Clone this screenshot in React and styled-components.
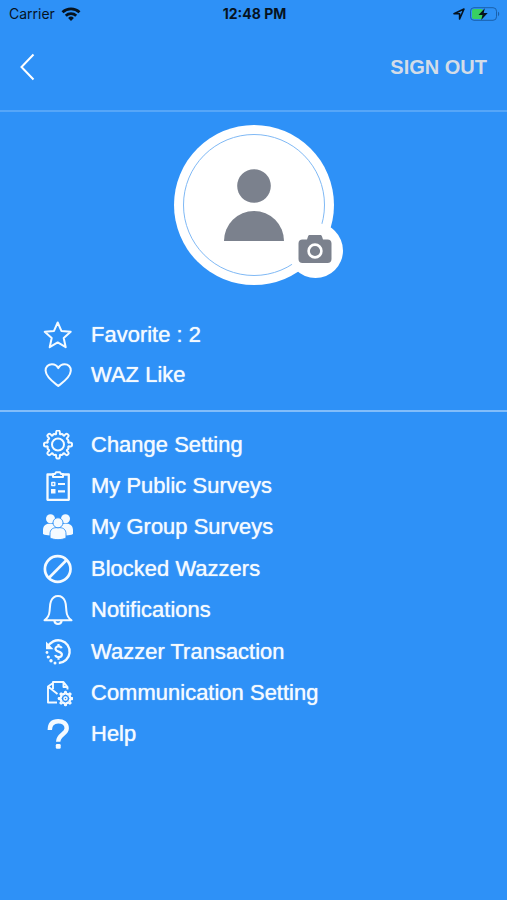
import React from "react";
import styled, { createGlobalStyle } from "styled-components";

// closed outline of a cog with rounded teeth
const cogPath = (cx, cy, outer, inner, teeth = 8) => {
  const step = (Math.PI * 2) / teeth;
  const at = (r, a) =>
    `${(cx + r * Math.sin(a)).toFixed(2)} ${(cy - r * Math.cos(a)).toFixed(2)}`;
  let d = "";
  for (let i = 0; i < teeth; i++) {
    const a = i * step;
    d += `${i ? "L" : "M"}${at(inner, a - step * 0.22)}`;
    d += `Q${at(outer, a - step * 0.19)} ${at(outer, a - step * 0.07)}`;
    d += `L${at(outer, a + step * 0.07)}`;
    d += `Q${at(outer, a + step * 0.19)} ${at(inner, a + step * 0.22)}`;
    d += `Q${at(inner - 0.6, a + step * 0.3)} ${at(inner, a + step * 0.37)}`;
    d += `Q${at(inner + 0.8, a + step * 0.5)} ${at(inner, a + step * 0.63)}`;
    d += `Q${at(inner - 0.6, a + step * 0.7)} ${at(inner, a + step * 0.78)}`;
  }
  return d + "Z";
};

const StarIcon = () => (
  <Icon viewBox="0 0 30 30">
    <path d="M14.7 2.500l3.700 8.400 9.300.9-7 6.200 2 9.200-8-4.800-8 4.800 2-9.200-7-6.200 9.300-.9z" />
  </Icon>
);

const HeartIcon = () => (
  <Icon viewBox="0 0 30 30">
    <path d="M15.300 26C11 22.600 3 17.500 2.600 10.800 2.400 6.800 5.400 4.200 8.900 4.200c2.700 0 5.200 1.400 6.400 4 1.200-2.600 3.700-4 6.400-4 3.500 0 6.300 2.600 6.100 6.600C27.500 17.500 19.600 22.600 15.300 26z" />
  </Icon>
);

const GearIcon = () => (
  <Icon viewBox="0 0 30 30">
    <path d={cogPath(15, 14.5, 14, 10.8)} />
    <circle cx="15" cy="14.5" r="6" />
  </Icon>
);

const ClipboardIcon = () => (
  <Icon viewBox="0 0 30 30">
    <path d="M10 3.500H4.500v25.300h21.300V3.500H20" strokeWidth="2.300" />
    <path d="M10 6V3h2l1-1.700h4L18 3h2v3z" strokeWidth="2" />
    <path d="M8.800 11.500h3v3h-3z" strokeWidth="1.400" />
    <path d="M8 18h4.500v4.500H8z" fill="currentColor" stroke="none" />
    <path d="M15 13h7M15 20.300h7" strokeWidth="2.200" />
  </Icon>
);

const GroupIcon = () => (
  <Icon viewBox="0 0 30 30">
    <g fill="currentColor" stroke="none">
      <circle cx="7.500" cy="6.700" r="4.500" />
      <circle cx="22.500" cy="6.700" r="4.500" />
      <path d="M0 22v-4c0-4 2.500-6.300 6-6.300h3.500l5.500 3 5.500-3H24c3.500 0 6 2.300 6 6.300v4c-2 1-4 1.400-7 1.400H7C4 23.400 2 23 0 22z" />
    </g>
    <g fill="currentColor" stroke="#2e91f7" strokeWidth="0.900">
      <path d="M7 26v-4c0-4.400 2.600-6.300 6.200-6.300h3.600c3.600 0 6.200 1.900 6.200 6.300v4c-4.600 2.200-11.400 2.200-16 0z" />
      <circle cx="15" cy="10.800" r="5" />
    </g>
  </Icon>
);

const BlockedIcon = () => (
  <Icon viewBox="0 0 30 30">
    <circle cx="14.700" cy="15" r="12.800" strokeWidth="2.700" />
    <path d="M5.800 24L23.600 6" strokeWidth="2.700" />
  </Icon>
);

const BellIcon = () => (
  <Icon viewBox="0 0 30 30">
    <path d="M1.500 25.300c3.500-2.500 4.800-5 5.100-9.300.4-4.500.4-7.500 1.400-9.800C9.300 3 11.800 1 15 1s5.700 2 7 5.200c1 2.300 1 5.300 1.400 9.800.3 4.300 1.600 6.800 5.100 9.300z" />
    <path d="M11.300 25.500c.3 2.300 1.700 3.500 3.700 3.500s3.400-1.200 3.700-3.500" />
  </Icon>
);

const TransactionIcon = () => (
  <Icon viewBox="0 0 30 30">
    <path d="M4.800 10A11.400 11.400 0 1 1 15.800 26" strokeWidth="2.400" />
    <path d="M3 4.500v7.800h7.500z" fill="currentColor" stroke="none" />
    <path
      d="M18.600 11.300c-.4-1.300-1.500-2-3-2-1.800 0-3.100 1-3.100 2.500 0 3.700 6.400 1.900 6.400 5.800 0 1.700-1.400 2.600-3.300 2.600-1.700 0-3-.8-3.400-2.200M15.500 7v2.300M15.500 20.200v2.500"
      strokeWidth="2.200"
    />
    <g fill="currentColor" stroke="none">
      <circle cx="4" cy="15.500" r="1.400" />
      <circle cx="5.300" cy="20" r="1.600" />
      <circle cx="8" cy="23.800" r="1.700" />
      <circle cx="12" cy="26" r="1.500" />
    </g>
  </Icon>
);

const CommunicationIcon = () => (
  <Icon viewBox="0 0 30 30">
    <path d="M14 24.500H5V8.500L10 5M5 8.500l9.500 7.500M10 11V4h10.500l4 5v2.500M20.500 4v5h4" strokeWidth="1.900" />
    <path d={cogPath(22.5, 20.5, 7, 4.7)} strokeWidth="1.700" />
    <circle cx="22.500" cy="20.500" r="1.500" strokeWidth="1.500" />
  </Icon>
);

const HelpIcon = () => (
  <Icon viewBox="0 0 30 30">
    <path
      d="M6.800 11C6.800 5 10 2.200 15.200 2.200c5 0 8.500 2.600 8.500 7 0 6-8.500 6.300-8.500 13.600"
      strokeWidth="4.400"
    />
    <rect x="12.800" y="25" width="4.900" height="4.800" rx="1.200" fill="currentColor" stroke="none" />
  </Icon>
);

const shortcuts = [
  { label: "Favorite : 2", icon: StarIcon },
  { label: "WAZ Like", icon: HeartIcon },
];

const settings = [
  { label: "Change Setting", icon: GearIcon },
  { label: "My Public Surveys", icon: ClipboardIcon },
  { label: "My Group Surveys", icon: GroupIcon },
  { label: "Blocked Wazzers", icon: BlockedIcon },
  { label: "Notifications", icon: BellIcon },
  { label: "Wazzer Transaction", icon: TransactionIcon },
  { label: "Communication Setting", icon: CommunicationIcon },
  { label: "Help", icon: HelpIcon },
];

const Menu = ({ items, height }) => (
  <MenuList $height={height}>
    {items.map(({ label, icon: ItemIcon }) => (
      <li key={label}>
        <MenuButton type="button">
          <ItemIcon />
          {label}
        </MenuButton>
      </li>
    ))}
  </MenuList>
);

const App = () => {
  return (
    <>
      <GlobalStyle />
      <StatusBar>
        <Carrier>
          Carrier
          <svg width="20" height="14" viewBox="0 0 20 14" fill="none" stroke="currentColor" strokeWidth="2.800">
            <path d="M1.500 5.200a12.400 12.400 0 0 1 17 0" />
            <path d="M4.800 8.800a7.500 7.500 0 0 1 10.400 0" />
            <path d="M10 14l-2.900-3a4.200 4.200 0 0 1 5.800 0z" fill="currentColor" stroke="none" />
          </svg>
        </Carrier>
        <Clock>12:48 PM</Clock>
        <Indicators>
          <svg width="12" height="12" viewBox="0 0 12 12" fill="none" stroke="currentColor" strokeWidth="1.600" strokeLinejoin="round">
            <path d="M1 5.800L11 1 6.600 11V5.800z" />
          </svg>
          <svg width="30" height="14" viewBox="0 0 30 14">
            <rect x="0.500" y="0.700" width="26" height="12.600" rx="3.500" fill="none" stroke="#1a60ab" />
            <rect x="2" y="2" width="11" height="10" rx="1.800" fill="#38cf62" />
            <path d="M28 4.800c1.600.5 1.600 3.900 0 4.400z" fill="#1a60ab" />
            <path d="M14.800 1.300L8.500 8h4l-1.300 4.900L17.700 6h-4z" fill="#06131f" />
          </svg>
        </Indicators>
      </StatusBar>
      <Header>
        <BackButton type="button" aria-label="Back">
          <svg width="16" height="28" viewBox="0 0 16 28" fill="none" stroke="currentColor" strokeWidth="2">
            <path d="M13.500 1.500L1.500 14l12 12.500" />
          </svg>
        </BackButton>
        <SignOut type="button">SIGN OUT</SignOut>
      </Header>
      <main>
        <Profile>
          <Avatar>
            <AvatarRing>
              <svg width="62" height="74" viewBox="0 0 62 74" fill="currentColor">
                <circle cx="31" cy="18" r="16.800" />
                <path d="M1 73a30 30 0 0 1 60 0z" />
              </svg>
            </AvatarRing>
            <CameraButton type="button" aria-label="Change photo">
              <svg width="34" height="30" viewBox="0 0 34 30">
                <path
                  d="M4.500 5.500H9L10 2.500C10.400 1.400 11 1 12 1h10c1 0 1.600.4 2 1.500l1 3h4.500c2.500 0 4 1.500 4 4v15.500c0 2.500-1.500 4-4 4h-25c-2.500 0-4-1.500-4-4V9.500c0-2.500 1.500-4 4-4z"
                  fill="currentColor"
                />
                <circle cx="17" cy="17" r="6.400" fill="none" stroke="#fff" strokeWidth="2.600" />
              </svg>
            </CameraButton>
          </Avatar>
        </Profile>
        <Menu items={shortcuts} height={80} />
        <Divider />
        <Menu items={settings} height={331} />
      </main>
    </>
  );
};

const GlobalStyle = createGlobalStyle`
  * {
    box-sizing: border-box;
  }

  body {
    margin: 0;
    background-color: #2e91f7;
    font-family: "Liberation Sans", Arial, sans-serif;
    color: #f4faff;
  }

  button {
    padding: 0;
    border: 0;
    background: none;
    color: inherit;
    font: inherit;
    cursor: pointer;
  }

  svg {
    display: block;
    flex: none;
  }
`;

const StatusBar = styled.div`
  display: grid;
  grid-template-columns: 1fr auto 1fr;
  align-items: center;
  height: 27px;
  padding: 0 7px 0 9px;
  font-family: Inter, sans-serif;
  font-size: 14px;
  line-height: 27px;
  color: #06131f;
`;

const Carrier = styled.div`
  display: flex;
  align-items: center;
  gap: 6px;
`;

const Clock = styled.div`
  font-weight: 700;
`;

const Indicators = styled.div`
  display: flex;
  align-items: center;
  justify-content: flex-end;
  gap: 5px;
`;

const Header = styled.header`
  display: flex;
  align-items: center;
  justify-content: space-between;
  height: 85px;
  padding: 0 20px 3px;
  border-bottom: 2px solid #56a6f8;
`;

const BackButton = styled.button`
  color: #fff;
`;

const SignOut = styled.button`
  && {
    font-size: 20px;
    font-weight: 700;
    color: #d3dce8;
  }
`;

const Profile = styled.section`
  display: flex;
  justify-content: center;
  padding: 13px 0 30px;
`;

const Avatar = styled.div`
  position: relative;
  display: flex;
  align-items: center;
  justify-content: center;
  width: 160px;
  height: 160px;
  border-radius: 50%;
  background-color: #fff;
  color: #7b818d;
`;

const AvatarRing = styled.div`
  display: flex;
  align-items: center;
  justify-content: center;
  width: 142px;
  height: 142px;
  border: 1px solid #80b9f5;
  border-radius: 50%;
`;

const CameraButton = styled.button`
  && {
    position: absolute;
    right: -9px;
    bottom: 7px;
    display: flex;
    align-items: center;
    justify-content: center;
    width: 55px;
    height: 55px;
    padding-bottom: 3px;
    border-radius: 50%;
    background-color: #fff;
  }
`;

const MenuList = styled.ul`
  display: grid;
  grid-auto-rows: 1fr;
  min-height: ${({ $height }) => $height}px;
  margin: 0;
  padding: 0;
  list-style: none;
`;

const MenuButton = styled.button`
  && {
    display: flex;
    align-items: center;
    gap: 18px;
    width: 100%;
    height: 100%;
    padding: 0 43px;
    font-size: 22px;
    line-height: 24px;
    text-align: left;
    text-shadow: 0 0 1px #f4faff;
  }
`;

const Icon = styled.svg.attrs({ "aria-hidden": true })`
  width: 30px;
  height: 30px;
  fill: none;
  stroke: currentColor;
  stroke-width: 2;
  stroke-linejoin: round;
`;

const Divider = styled.hr`
  height: 2px;
  margin: 15px 0 12px;
  border: 0;
  background-color: #82bdfa;
`;

export default App;
